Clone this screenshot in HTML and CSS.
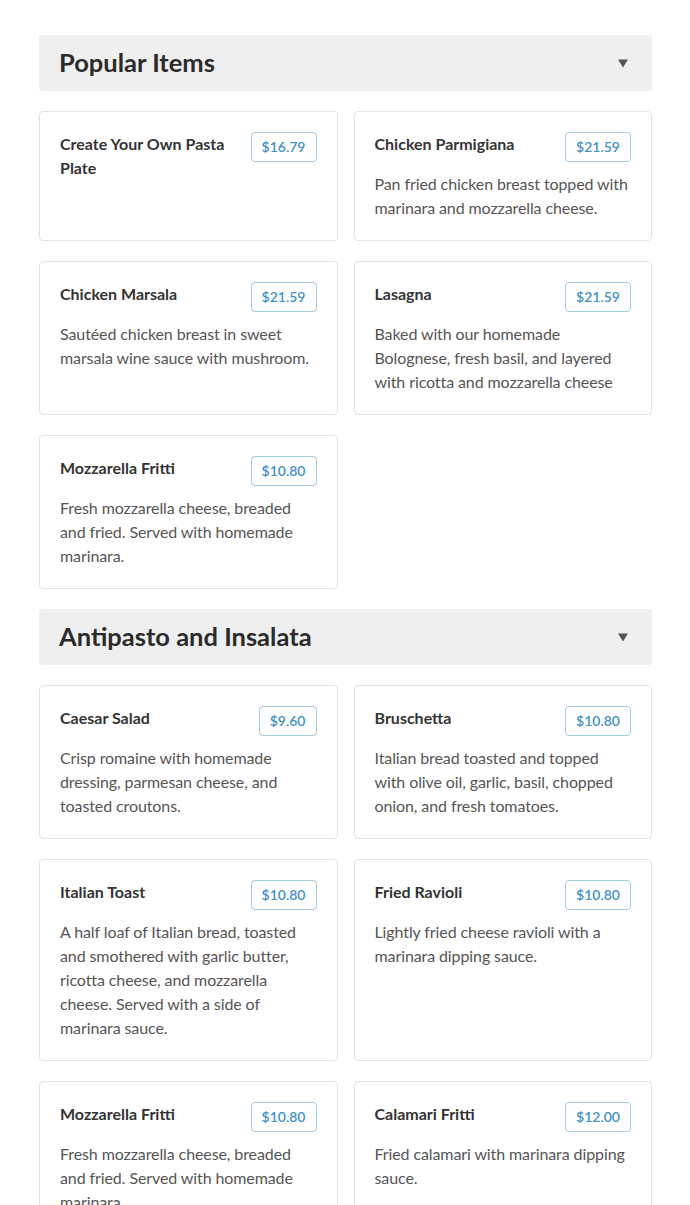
FILE: index.html
```html
<!DOCTYPE html>
<html lang="en">
<head>
<meta charset="utf-8">
<title>Menu</title>
<link rel="stylesheet" href="styles.css">
</head>
<body>
<main class="menu">
  <section class="category">
    <header class="category-header">
      <h2 class="category-title">Popular Items</h2>
      <svg class="caret" width="10" height="9" viewBox="0 0 10 9" aria-hidden="true"><path d="M0 0.5 H10 L5 8.5 Z" fill="#555"/></svg>
    </header>
    <div class="items">
      <article class="item">
        <div class="item-head"><h3 class="item-name">Create Your Own Pasta Plate</h3><span class="price">$16.79</span></div>
      </article>
      <article class="item">
        <div class="item-head"><h3 class="item-name">Chicken Parmigiana</h3><span class="price">$21.59</span></div>
        <p class="item-desc">Pan fried chicken breast topped with marinara and mozzarella cheese.</p>
      </article>
      <article class="item">
        <div class="item-head"><h3 class="item-name">Chicken Marsala</h3><span class="price">$21.59</span></div>
        <p class="item-desc">Sautéed chicken breast in sweet marsala wine sauce with mushroom.</p>
      </article>
      <article class="item">
        <div class="item-head"><h3 class="item-name">Lasagna</h3><span class="price">$21.59</span></div>
        <p class="item-desc">Baked with our homemade Bolognese, fresh basil, and layered with ricotta and mozzarella cheese</p>
      </article>
      <article class="item">
        <div class="item-head"><h3 class="item-name">Mozzarella Fritti</h3><span class="price">$10.80</span></div>
        <p class="item-desc">Fresh mozzarella cheese, breaded and fried. Served with homemade marinara.</p>
      </article>
    </div>
  </section>
  <section class="category">
    <header class="category-header">
      <h2 class="category-title">Antipasto and Insalata</h2>
      <svg class="caret" width="10" height="9" viewBox="0 0 10 9" aria-hidden="true"><path d="M0 0.5 H10 L5 8.5 Z" fill="#555"/></svg>
    </header>
    <div class="items">
      <article class="item">
        <div class="item-head"><h3 class="item-name">Caesar Salad</h3><span class="price">$9.60</span></div>
        <p class="item-desc">Crisp romaine with homemade dressing, parmesan cheese, and toasted croutons.</p>
      </article>
      <article class="item">
        <div class="item-head"><h3 class="item-name">Bruschetta</h3><span class="price">$10.80</span></div>
        <p class="item-desc">Italian bread toasted and topped with olive oil, garlic, basil, chopped onion, and fresh tomatoes.</p>
      </article>
      <article class="item">
        <div class="item-head"><h3 class="item-name">Italian Toast</h3><span class="price">$10.80</span></div>
        <p class="item-desc">A half loaf of Italian bread, toasted and smothered with garlic butter, ricotta cheese, and mozzarella cheese. Served with a side of marinara sauce.</p>
      </article>
      <article class="item">
        <div class="item-head"><h3 class="item-name">Fried Ravioli</h3><span class="price">$10.80</span></div>
        <p class="item-desc">Lightly fried cheese ravioli with a marinara dipping sauce.</p>
      </article>
      <article class="item">
        <div class="item-head"><h3 class="item-name">Mozzarella Fritti</h3><span class="price">$10.80</span></div>
        <p class="item-desc">Fresh mozzarella cheese, breaded and fried. Served with homemade marinara.</p>
      </article>
      <article class="item">
        <div class="item-head"><h3 class="item-name">Calamari Fritti</h3><span class="price">$12.00</span></div>
        <p class="item-desc">Fried calamari with marinara dipping sauce.</p>
      </article>
    </div>
  </section>
</main>
</body>
</html>
```

FILE: styles.css
```css
* { box-sizing: border-box; }
html, body { margin: 0; padding: 0; background: #fff; }
body {
  font-family: Lato, "Open Sans", sans-serif;
  color: #333;
  overflow: hidden;
}
.menu {
  padding: 35px 38px 0 39px;
  display: flex;
  flex-direction: column;
  gap: 20px;
}
.category {
  display: flex;
  flex-direction: column;
  gap: 20px;
}
.category-header {
  height: 56px;
  background: #efefef;
  border-radius: 3px;
  display: flex;
  align-items: center;
  justify-content: space-between;
  padding: 0 24px 2px 20px;
}
.category-title {
  margin: 0;
  font-size: 25.5px;
  font-weight: 700;
  color: #2b2b2b;
  line-height: 32px;
}
.caret {
  display: block;
  flex: none;
  margin-top: 2px;
}
.items {
  display: grid;
  grid-template-columns: 1fr 1fr;
  gap: 20px 16px;
}
.item {
  border: 1px solid #e3e3e3;
  border-radius: 4px;
  padding: 20px;
  background: #fff;
}
.item-head {
  display: flex;
  justify-content: space-between;
  align-items: flex-start;
  gap: 16px;
}
.item-name {
  margin: 0;
  font-size: 16px;
  font-weight: 700;
  line-height: 24px;
  color: #333;
}
.price {
  flex: none;
  border: 1px solid #a3cbe2;
  border-radius: 4px;
  color: #4292c5;
  font-size: 14px;
  line-height: 28px;
  padding: 0 10px;
  font-weight: 600;
}
.item-desc {
  margin: 10px 0 0;
  font-size: 16px;
  line-height: 24px;
  letter-spacing: -0.1px;
  color: #555;
}
```
